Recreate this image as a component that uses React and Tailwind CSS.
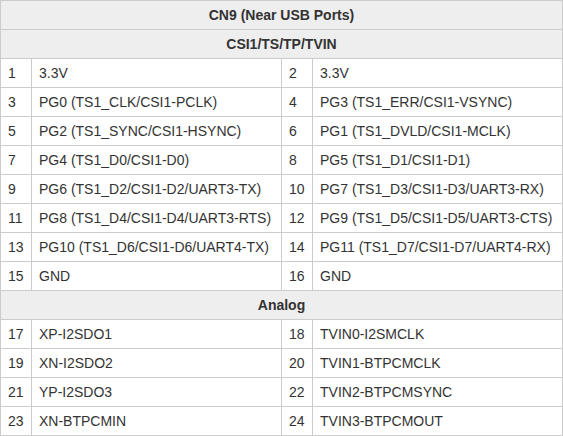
const pins = [
    ['1', '3.3V', '2', '3.3V'],
    ['3', 'PG0 (TS1_CLK/CSI1-PCLK)', '4', 'PG3 (TS1_ERR/CSI1-VSYNC)'],
    ['5', 'PG2 (TS1_SYNC/CSI1-HSYNC)', '6', 'PG1 (TS1_DVLD/CSI1-MCLK)'],
    ['7', 'PG4 (TS1_D0/CSI1-D0)', '8', 'PG5 (TS1_D1/CSI1-D1)'],
    ['9', 'PG6 (TS1_D2/CSI1-D2/UART3-TX)', '10', 'PG7 (TS1_D3/CSI1-D3/UART3-RX)'],
    ['11', 'PG8 (TS1_D4/CSI1-D4/UART3-RTS)', '12', 'PG9 (TS1_D5/CSI1-D5/UART3-CTS)'],
    ['13', 'PG10 (TS1_D6/CSI1-D6/UART4-TX)', '14', 'PG11 (TS1_D7/CSI1-D7/UART4-RX)'],
    ['15', 'GND', '16', 'GND'],
];

const analog = [
    ['17', 'XP-I2SDO1', '18', 'TVIN0-I2SMCLK'],
    ['19', 'XN-I2SDO2', '20', 'TVIN1-BTPCMCLK'],
    ['21', 'YP-I2SDO3', '22', 'TVIN2-BTPCMSYNC'],
    ['23', 'XN-BTPCMIN', '24', 'TVIN3-BTPCMOUT'],
];

const cell = 'border border-[#cccccc] px-[7px] h-[29px] align-middle whitespace-nowrap';

function Heading({ children }) {
    return (
        <tr>
            <th colSpan={4} className={`${cell} bg-[#eeeeee] text-center font-bold`}>
                {children}
            </th>
        </tr>
    );
}

function PinRow({ row }) {
    return (
        <tr>
            <td className={cell}>{row[0]}</td>
            <td className={cell}>{row[1]}</td>
            <td className={cell}>{row[2]}</td>
            <td className={cell}>{row[3]}</td>
        </tr>
    );
}

export default function App() {
    return (
        <div className="bg-white w-[563px] h-[436px]">
            <table
                className="w-[563px] border-collapse text-[14px] leading-[16px] text-[#333333] table-fixed"
                style={{ fontFamily: '"Liberation Sans", Arial, sans-serif' }}
            >
                <colgroup>
                    <col className="w-[31px]" />
                    <col className="w-[250px]" />
                    <col className="w-[31px]" />
                    <col />
                </colgroup>
                <tbody>
                    <Heading>CN9 (Near USB Ports)</Heading>
                    <Heading>CSI1/TS/TP/TVIN</Heading>
                    {pins.map((row) => (
                        <PinRow key={row[0]} row={row} />
                    ))}
                    <Heading>Analog</Heading>
                    {analog.map((row) => (
                        <PinRow key={row[0]} row={row} />
                    ))}
                </tbody>
            </table>
        </div>
    );
}
